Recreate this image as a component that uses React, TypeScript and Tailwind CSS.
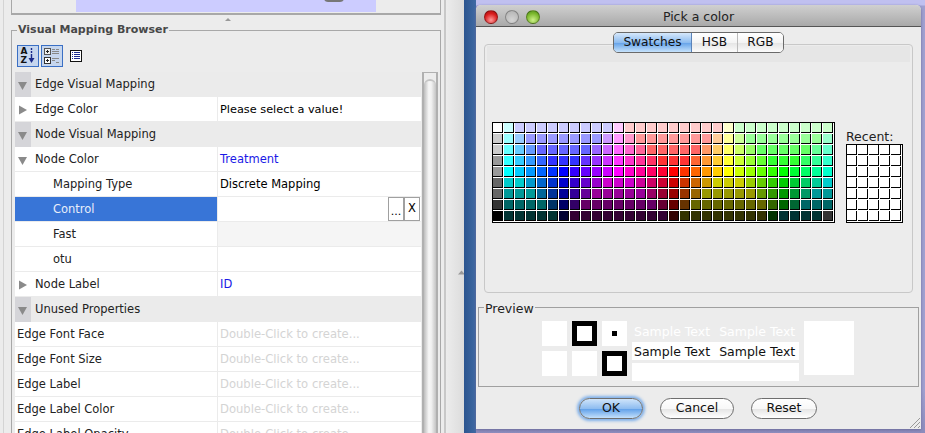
import React from "react";

const swatchRows = [
  "fff cff ccf ccf ccf ccf ccf ccf ccf ccf ccf fcf fcc fcc fcc fcc fcc fcc fcc fcc fcc ffc cfc cfc cfc cfc cfc cfc cfc cfc cfc",
  "ccc 9ff 9cf 99f 99f 99f 99f 99f 99f 99f c9f f9f f9c f99 f99 f99 f99 f99 f99 f99 fc9 ff9 cf9 9f9 9f9 9f9 9f9 9f9 9f9 9f9 9fc",
  "ccc 6ff 6cf 69f 66f 66f 66f 66f 66f 96f c6f f6f f6c f69 f66 f66 f66 f66 f66 f96 fc6 ff6 cf6 9f6 6f6 6f6 6f6 6f6 6f6 6f9 6fc",
  "999 3ff 3cf 39f 36f 33f 33f 33f 63f 93f c3f f3f f3c f39 f36 f33 f33 f33 f63 f93 fc3 ff3 cf3 9f3 6f3 3f3 3f3 3f3 3f6 3f9 3fc",
  "999 0ff 0cf 09f 06f 03f 00f 30f 60f 90f c0f f0f f0c f09 f06 f03 f00 f30 f60 f90 fc0 ff0 cf0 9f0 6f0 3f0 0f0 0f3 0f6 0f9 0fc",
  "666 0cc 0cc 09c 06c 03c 00c 30c 60c 90c c0c c0c c0c c09 c06 c03 c00 c30 c60 c90 cc0 cc0 cc0 9c0 6c0 3c0 0c0 0c3 0c6 0c9 0cc",
  "666 099 099 099 069 039 009 309 609 909 909 909 909 909 906 903 900 930 960 990 990 990 990 990 690 390 090 093 096 099 099",
  "333 066 066 066 066 036 006 306 606 606 606 606 606 606 606 603 600 630 660 660 660 660 660 660 660 360 060 063 066 066 066",
  "000 033 033 033 033 033 003 303 303 303 303 303 303 303 303 303 300 330 330 330 330 330 330 330 330 030 033 033 033 033 333",
].flatMap((r) => r.split(" "));

const Triangle: React.FC<{ open?: boolean }> = ({ open }) => (
  <svg width="12" height="12" viewBox="0 0 12 12">
    <path d={open ? "M1 3h9l-4.500 8z" : "M2 1.500l8 4.500-8 4.500z"} fill="#8a8a8a" />
  </svg>
);

const Section: React.FC<{ title: string }> = ({ title }) => (
  <div className="flex h-[25px] items-center bg-[#ebebeb]">
    <div className="flex h-full w-4 items-center justify-center bg-[#d5d5d9]">
      <Triangle open />
    </div>
    <span className="ml-1 text-[#222]">{title}</span>
  </div>
);

const Row: React.FC<{
  label: string;
  indent: string;
  arrow?: "open" | "closed";
  selected?: boolean;
  valueClass?: string;
  children?: React.ReactNode;
}> = ({ label, indent, arrow, selected, valueClass, children }) => (
  <div className="flex h-[25px] border-b border-[#ebebeb] bg-white">
    <div className={`flex w-[203px] items-center border-r border-[#ebebeb] pt-px ${indent} ${selected ? "bg-[#3875d7] text-[#e8eefa]" : "text-[#222]"}`}>
      {arrow && (
        <div className="flex w-5 shrink-0 justify-center pr-1">
          <Triangle open={arrow === "open"} />
        </div>
      )}
      {label}
    </div>
    <div className={`flex flex-1 items-center pl-[2px] ${valueClass ?? "pt-px"}`}>{children}</div>
  </div>
);

const unused = ["Edge Font Face", "Edge Font Size", "Edge Label", "Edge Label Color", "Edge Label Opacity"];

const MappingTable: React.FC = () => (
  <div className="h-[361px] w-[406px] shrink-0 overflow-hidden">
    <Section title="Edge Visual Mapping" />
    <Row label="Edge Color" indent="" arrow="closed" valueClass="pt-px text-[11.300px]">Please select a value!</Row>
    <Section title="Node Visual Mapping" />
    <Row label="Node Color" indent="" arrow="open" valueClass="pt-px text-[#1a1ae6]">Treatment</Row>
    <Row label="Mapping Type" indent="pl-[38px]">Discrete Mapping</Row>
    <Row label="Control" indent="pl-[38px]" selected valueClass="justify-end">
      <div className="flex h-full pr-px">
        <div className="flex w-4 items-end justify-center border border-[#a0a0a0] bg-white pb-[3px] text-[11px] leading-none">...</div>
        <div className="flex w-4 items-center justify-center border border-[#a0a0a0] bg-white">X</div>
      </div>
    </Row>
    <Row label="Fast" indent="pl-[38px]" valueClass="bg-[#f5f5f5]" />
    <Row label="otu" indent="pl-[38px]" />
    <Row label="Node Label" indent="" arrow="closed" valueClass="pt-px text-[#1a1ae6]">ID</Row>
    <Section title="Unused Properties" />
    {unused.map((name) => (
      <Row key={name} label={name} indent="pl-[2px]" valueClass="pt-px text-[11.600px] text-[#d4d4d4]">Double-Click to create...</Row>
    ))}
  </div>
);

const Scrollbar: React.FC = () => (
  <div className="ml-px h-[361px] w-[16px] shrink-0 border-x-2 border-t border-[#b0b0b0] bg-[#ececec] pt-[6px]">
    <div className="h-full rounded-t-[6px] border-t-2 border-[#c4c4c4] bg-[linear-gradient(to_right,#bdbdbd,#f6f6f6_40%,#f2f2f2_60%,#c4c4c4)]" />
  </div>
);

const Toolbar: React.FC = () => (
  <div className="flex h-[27px] items-start gap-[2px]">
    <div className="flex h-[22px] w-[22px] items-center justify-center gap-px border border-[#3a6fc4] bg-[#c6d6ee]">
      <div className="flex flex-col text-[9px] font-semibold leading-[9px] text-[#111]">
        <span>A</span>
        <span>Z</span>
      </div>
      <svg width="7" height="16" viewBox="0 0 7 16">
        <path d="M3.500 0v2M3.500 3v2M3.500 6v6" stroke="#1a2a8a" strokeWidth="1.400" />
        <path d="M0.500 10h6l-3 5z" fill="#1a2a8a" />
      </svg>
    </div>
    <div className="flex h-[22px] w-[22px] items-center justify-center border border-[#3a6fc4] bg-[#c6d6ee]">
      <svg width="16" height="16" viewBox="0 0 16 16">
        <rect x="0.500" y="0.500" width="6" height="6" fill="#eee" stroke="#555" />
        <rect x="0.500" y="9.500" width="6" height="6" fill="#fff" stroke="#333" />
        <path d="M2 3.500h3M3.500 2v3M2 12.500h3M3.500 11v3" stroke="#222" />
        <path d="M8 1.500h3M12 1.500h3M8 3.500h7M8 5.500h7M8 10.500h7M8 12.500h3M12 14.500h3" stroke="#888" />
      </svg>
    </div>
    <div className="flex h-[22px] w-[22px] items-center justify-center">
      <svg width="12" height="12" viewBox="0 0 12 12">
        <rect x="0.500" y="0.500" width="11" height="11" fill="#fff" stroke="#111" />
        <path d="M2 2.500h1M4 2.500h6M2 4.500h1M4 4.500h6M2 6.500h1M4 6.500h6M2 8.500h1M4 8.500h6" stroke="#1c2c90" />
      </svg>
    </div>
  </div>
);

const LeftPanel: React.FC = () => (
  <div className="flex h-full w-[464px] shrink-0 bg-[linear-gradient(to_right,#ececec_446px,#dcdcdc)]">
    <div className="ml-[3px] h-full w-[443px] shrink-0 border-l border-r-2 border-l-[#d4d4d4] border-r-[#c8c8c8] pl-[7px]">
      <div className="h-[15px] w-[430px] border-x border-b-2 border-[#a8a8a8] pl-[64px]">
        <div className="relative h-3 w-[300px] overflow-hidden bg-[#ccccff]">
          <div className="absolute left-[248px] top-[-6px] h-2 w-[20px] rounded-full bg-[#777]" />
        </div>
      </div>
      <div className="flex h-[7px] justify-center">
        <svg className="mt-[2px]" width="6" height="4" viewBox="0 0 6 4">
          <path d="M0 4l3-3 3 3z" fill="#999" />
        </svg>
      </div>
      <fieldset className="h-[418px] w-[430px] border border-[#a8a8a8] pl-[3px]">
        <legend className="ml-[2px] px-px text-[11px] font-bold leading-[16px] text-[#484848]">Visual Mapping Browser</legend>
        <div className="mt-[7px]">
          <div className="pl-[2px]">
            <Toolbar />
          </div>
          <div className="flex">
            <MappingTable />
            <Scrollbar />
          </div>
        </div>
      </fieldset>
    </div>
    <div className="pl-[12px] pt-[270px]">
      <svg width="7" height="5" viewBox="0 0 7 5">
        <path d="M0 4.500l3.500-4 3.500 4z" fill="#999" />
      </svg>
    </div>
  </div>
);

const Swatch: React.FC<{ color: string }> = ({ color }) => (
  <div className="h-[10px] w-[10px] border-b border-r border-black" style={{ background: `#${color}` }} />
);

const Light: React.FC<{ className: string }> = ({ className }) => (
  <div className={`h-[14px] w-[14px] rounded-full border border-black/30 ${className}`} />
);

const Tab: React.FC<{ label: string; active?: boolean; className: string }> = ({ label, active, className }) => (
  <div
    className={`flex items-center justify-center ${className} ${
      active
        ? "bg-[linear-gradient(to_bottom,#d6e8fb,#8dbcf0_50%,#6aa6ea_55%,#c6e2fb)]"
        : "bg-[linear-gradient(to_bottom,#ffffff,#f4f4f4_50%,#e6e6e6_55%,#fbfbfb)]"
    }`}
  >
    {label}
  </div>
);

const ChipBox: React.FC<{ ring?: boolean; dot?: boolean }> = ({ ring, dot }) => (
  <div className={`flex h-[25px] w-[25px] items-center justify-center bg-white ${ring ? "border-[5px] border-black" : ""}`}>
    {dot && <div className="h-[5px] w-[5px] bg-black" />}
  </div>
);

const PushButton: React.FC<{ label: string; className: string }> = ({ label, className }) => (
  <div
    className={`flex h-[21px] items-center justify-center rounded-full border border-[#6e6e6e] bg-[linear-gradient(to_bottom,#ffffff,#f8f8f8_50%,#e6e6e6_55%,#ffffff)] ${className}`}
  >
    {label}
  </div>
);

const ColorDialog: React.FC = () => (
  <div className="h-[424px] w-[445px] shrink-0 rounded-t-[5px] bg-[#ececec] text-[12.500px] shadow-[0_1px_3px_#6a6a9a]">
    <div className="relative flex h-[22px] items-center rounded-t-[5px] border-b border-[#555] bg-[linear-gradient(to_bottom,#d0d0d0,#a9a9a9)] pl-2 pt-[3px]">
      <div className="flex gap-[7px]">
        <Light className="bg-[radial-gradient(circle_at_50%_75%,#ff9a9a,#d81c1c_60%,#a01010)]" />
        <Light className="bg-[radial-gradient(circle_at_50%_75%,#d4d4d4,#b0b0b0)]" />
        <Light className="bg-[radial-gradient(circle_at_50%_75%,#cdf08a,#7cb82e_60%,#4f8a18)]" />
      </div>
      <span className="absolute inset-x-0 text-center text-[#222]">Pick a color</span>
    </div>
    <div className="relative z-10 mt-[5px] flex justify-center">
      <div className="flex h-[21px] w-[171px] overflow-hidden rounded-[5px] border border-[#6a6a6a] text-[12.200px] text-[#111]">
        <Tab label="Swatches" active className="w-[78px] border-r border-[#5a82b8]" />
        <Tab label="HSB" className="w-[46px] border-r border-[#bbb]" />
        <Tab label="RGB" className="flex-1" />
      </div>
    </div>
    <div className="mx-2 -mt-[9px] h-[249px] rounded-[4px] border border-[#c8c8c8]">
      <div className="mx-[2px] mt-px h-[16px] bg-[#e6e6e6]" />
      <div className="flex items-end pl-[7px] pt-[60px]">
        <div className="border border-black bg-white pb-px pr-px">
          <div className="grid grid-cols-[repeat(31,10px)] gap-px">
            {swatchRows.map((c, i) => (
              <Swatch key={i} color={c} />
            ))}
          </div>
        </div>
        <div className="ml-[11px]">
          <div className="mb-[1px] text-[#222]">Recent:</div>
          <div className="border border-black bg-white pb-px pr-px">
            <div className="grid grid-cols-[repeat(5,10px)] gap-px">
              {Array.from({ length: 35 }, (_, i) => (
                <Swatch key={i} color="fff" />
              ))}
            </div>
          </div>
        </div>
      </div>
    </div>
    <fieldset className="mx-[2px] mt-[6px] h-[88px] border border-[#a0a0a0]">
      <legend className="relative top-[2px] ml-[5px] px-px leading-[16px] text-[#222]">Preview</legend>
      <div className="flex pl-[63px] pt-[6px]">
        <div className="grid grid-cols-[repeat(3,25px)] gap-[5px] self-start">
          <ChipBox />
          <ChipBox ring />
          <ChipBox dot />
          <ChipBox />
          <ChipBox />
          <ChipBox ring />
        </div>
        <div className="ml-[5px] w-[167px]">
          <div className="flex h-[21px] items-center gap-[9px] pl-[2px] pt-px text-white">
            <span>Sample Text</span>
            <span>Sample Text</span>
          </div>
          <div className="flex h-[18px] items-center gap-[9px] bg-white pl-[2px] pt-[3px] text-[#111]">
            <span>Sample Text</span>
            <span>Sample Text</span>
          </div>
          <div className="mt-[3px] h-[18px] bg-white" />
        </div>
        <div className="ml-[5px] h-[54px] w-[50px] bg-white" />
      </div>
    </fieldset>
    <div className="relative mt-[11px] flex pl-[103px] text-[#111]">
      <PushButton
        label="OK"
        className="w-[64px] border-[#2f6fc0] !bg-[linear-gradient(to_bottom,#cfe4fa,#8fbdf0_50%,#65a3ea_55%,#c4e0fb)] shadow-[0_0_3px_2px_#7fb0ea]"
      />
      <PushButton label="Cancel" className="ml-[17px] w-[74px]" />
      <PushButton label="Reset" className="ml-[17px] w-[66px]" />
      <svg className="absolute bottom-[-9px] right-px" width="11" height="11" viewBox="0 0 11 11">
        <path d="M1 11L11 1M5 11l6-6M9 11l2-2" stroke="#999" />
      </svg>
    </div>
  </div>
);

const App: React.FC = () => (
  <div className="flex h-[433px] w-[925px] overflow-hidden bg-[#ececec] font-['DejaVu_Sans',sans-serif] text-[11.500px] leading-none">
    <LeftPanel />
    <div className="h-full w-3 shrink-0 bg-[linear-gradient(to_right,#2c5590,#3f6aa3)]" />
    <div className="flex h-full flex-1 bg-[linear-gradient(to_bottom,#c0c0f0_5px,#a0a0d0_6px,#a0a0d0_90%,#8c8cbc)] pt-[5px]">
      <ColorDialog />
    </div>
  </div>
);

export default App;
